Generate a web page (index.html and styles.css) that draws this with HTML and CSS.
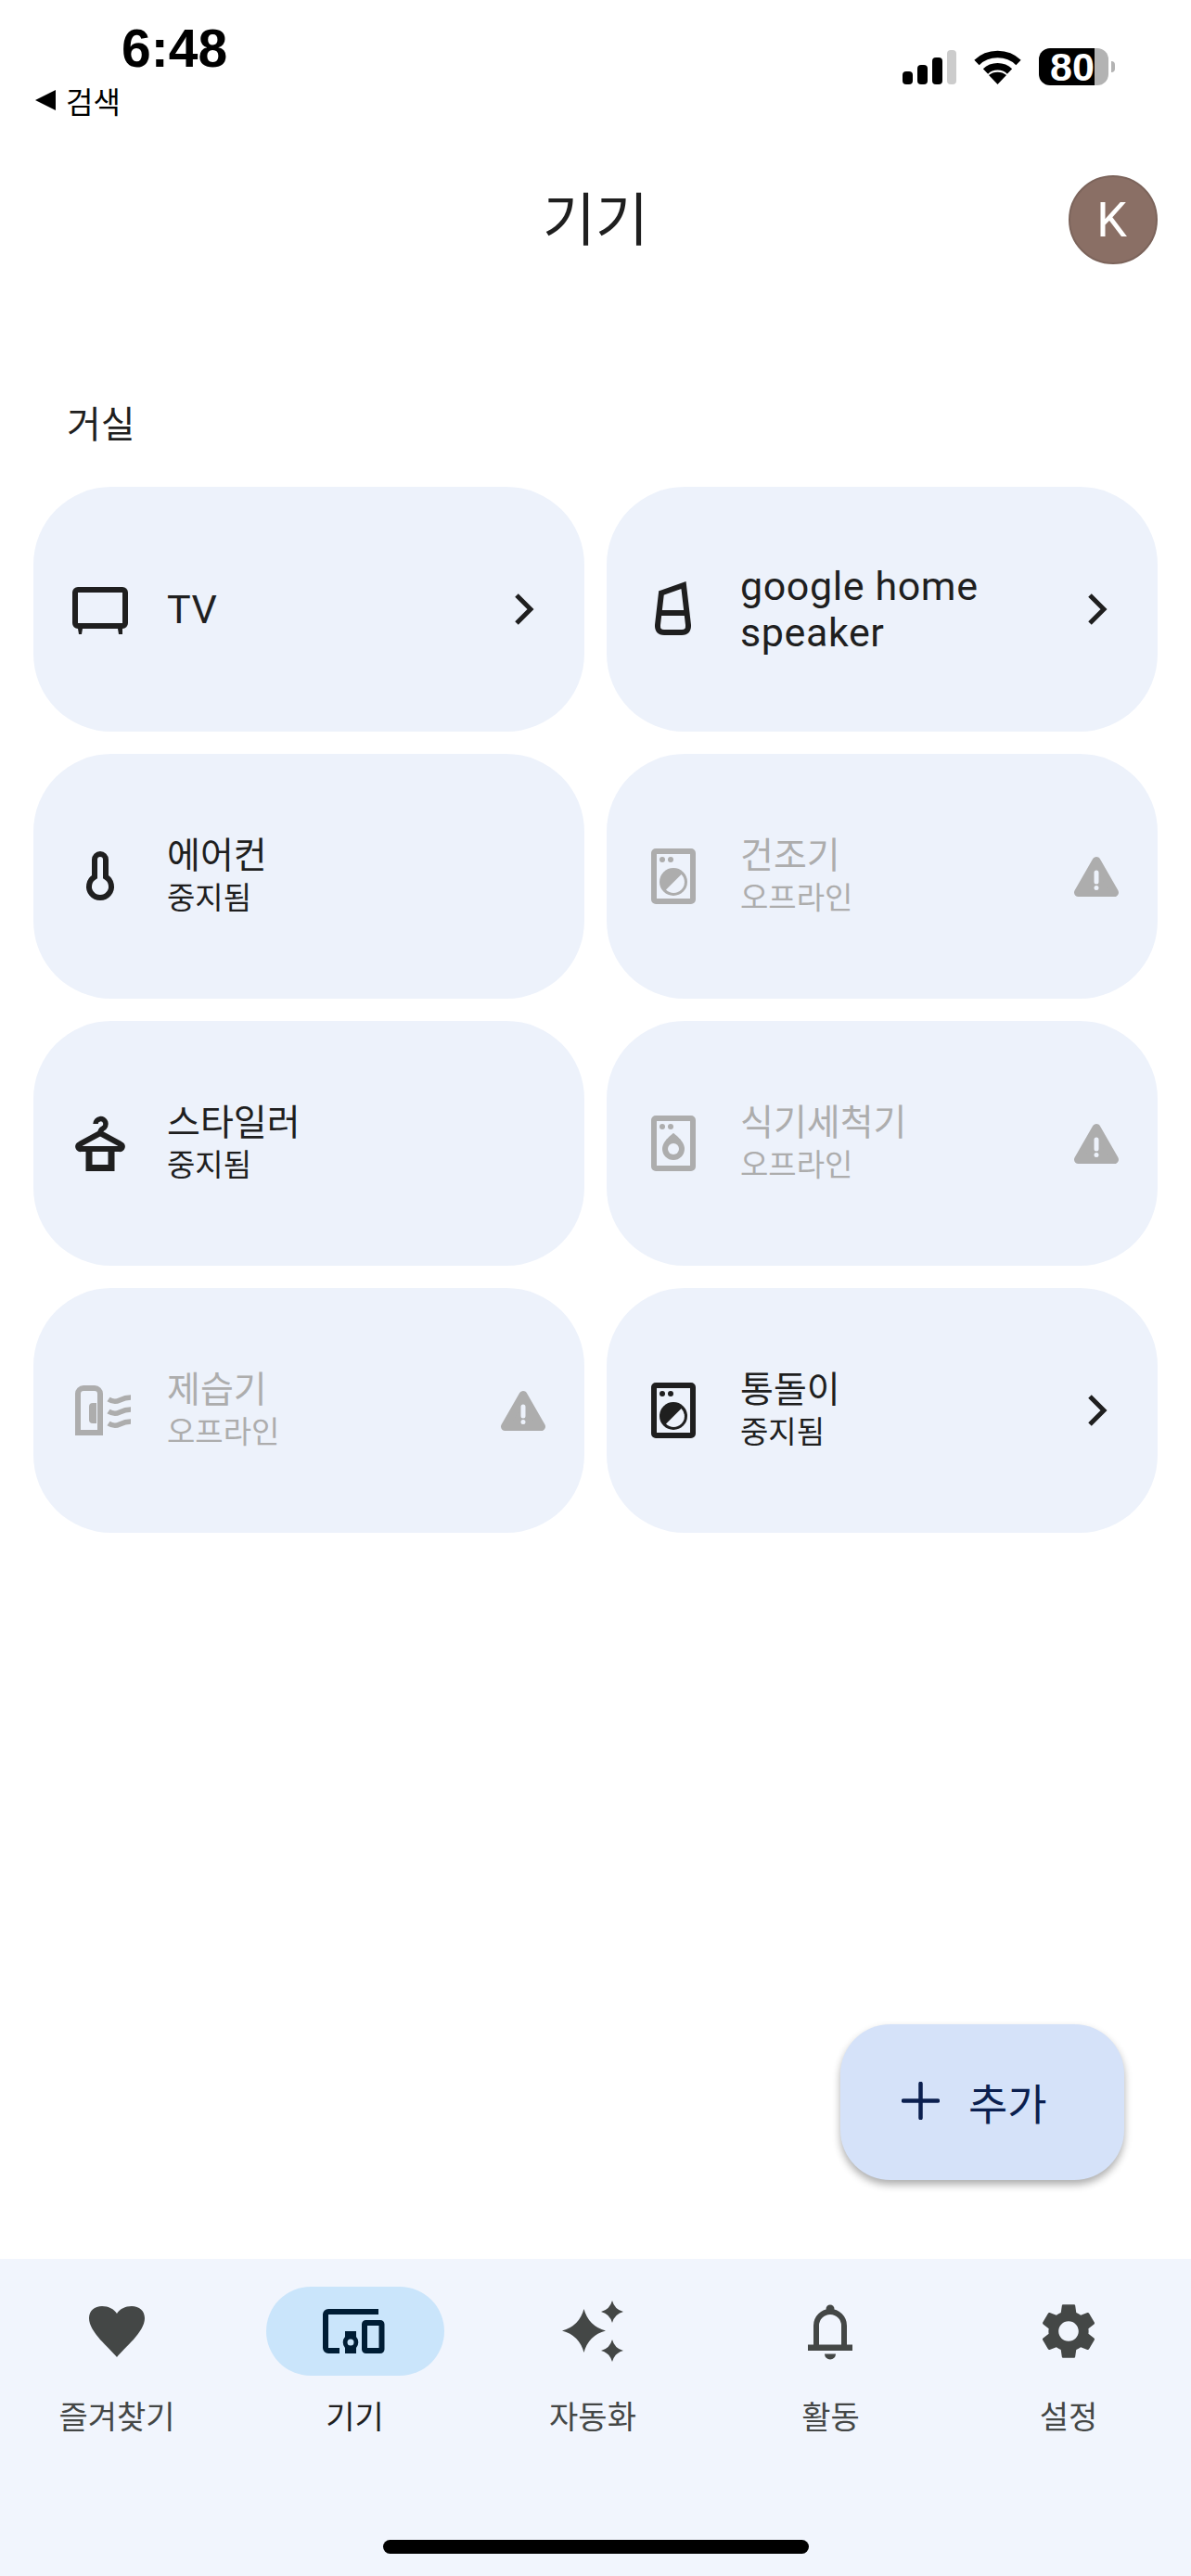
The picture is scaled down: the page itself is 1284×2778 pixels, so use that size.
FILE: index.html
```html
<!DOCTYPE html>
<html lang="ko">
<head>
<meta charset="utf-8">
<title>기기</title>
<link rel="stylesheet" href="styles.css">
</head>
<body>
<div class="phone">
  <div class="status">
    <div class="status-left">
      <div class="time">6:48</div>
      <div class="back">
        <svg class="back-arrow" viewBox="0 0 22 22" width="22" height="22"><path d="M22 0V22L0 11Z"/></svg>
        <span>검색</span>
      </div>
    </div>
    <div class="status-right">
      <svg class="signal" viewBox="0 0 58 37" width="58" height="37">
        <rect x="0" y="23" width="11" height="14" rx="4"/>
        <rect x="16" y="16" width="11" height="21" rx="4"/>
        <rect x="32" y="8" width="11" height="29" rx="4"/>
        <rect class="signal-off" x="48" y="0" width="10" height="37" rx="4"/>
      </svg>
      <svg class="wifi" viewBox="0 0 51 37" width="51" height="37">
        <path class="wifi-arc" d="M3 13.500C15 1.500 36 1.500 48 13.500"/>
        <path class="wifi-arc" d="M12.500 23C19.500 16 31.500 16 38.500 23"/>
        <path d="M25.500 37L16 27C21 22.500 30 22.500 35 27Z"/>
      </svg>
      <div class="battery">
        <div class="battery-body">80</div>
        <div class="battery-nub"></div>
      </div>
    </div>
  </div>

  <header class="header">
    <div></div>
    <h1 class="title">기기</h1>
    <div class="avatar">K</div>
  </header>

  <main class="main">
    <h2 class="room">거실</h2>
    <div class="grid">

      <div class="card">
        <svg class="icon" viewBox="0 0 72 72">
          <rect class="line" x="9" y="15" width="54" height="39" rx="3"/>
          <path class="solid" d="M12 57h5l-1 6h-3ZM55 57h5v6h-4Z"/>
        </svg>
        <div class="text"><div class="name name-latin">TV</div></div>
        <svg class="trail" viewBox="0 0 72 72"><path class="chev" d="M29 21L44 36L29 51"/></svg>
      </div>

      <div class="card">
        <svg class="icon" viewBox="0 0 72 72">
          <path class="line" d="M23 18.500L47 10L52 53Q52.500 61 45 61H26Q18.500 61 19 53Z"/>
          <path class="line" d="M21 40H50"/>
        </svg>
        <div class="text"><div class="name name-latin">google home speaker</div></div>
        <svg class="trail" viewBox="0 0 72 72"><path class="chev" d="M29 21L44 36L29 51"/></svg>
      </div>

      <div class="card">
        <svg class="icon" viewBox="0 0 72 72">
          <path class="line" d="M30 36.600V18a6 6 0 0 1 12 0V36.600A12 12 0 1 1 30 36.600Z"/>
        </svg>
        <div class="text"><div class="name">에어컨</div><div class="sub">중지됨</div></div>
      </div>

      <div class="card card-off">
        <svg class="icon" viewBox="0 0 72 72">
          <rect class="line" x="15" y="9" width="42" height="54" rx="2"/>
          <circle class="solid" cx="24" cy="18" r="3"/><circle class="solid" cx="33" cy="18" r="3"/>
          <circle class="solid" cx="36" cy="42" r="15"/>
          <path class="hole" d="M44.500 34A11.500 11.500 0 0 1 28 50.500Z"/>
        </svg>
        <div class="text"><div class="name">건조기</div><div class="sub">오프라인</div></div>
        <svg class="trail" viewBox="0 0 72 72"><path class="warn" d="M36 19.500L55.500 53.500H16.500Z"/><path class="warn-mark" d="M36 32V42M36 48.500V48.600"/></svg>
      </div>

      <div class="card">
        <svg class="icon" viewBox="0 0 72 72">
          <path class="line-thin" d="M31 15a5.500 5.500 0 1 1 8 5q-3 1.500-3 5"/>
          <path class="line" d="M36 25L58 37A2.500 2.500 0 0 1 56.500 42H15.500A2.500 2.500 0 0 1 14 37Z"/>
          <path class="line-heavy" d="M24 42V62.500H48V42"/>
        </svg>
        <div class="text"><div class="name">스타일러</div><div class="sub">중지됨</div></div>
      </div>

      <div class="card card-off">
        <svg class="icon" viewBox="0 0 72 72">
          <rect class="line" x="15" y="9" width="42" height="54" rx="2"/>
          <circle class="solid" cx="24" cy="18" r="3"/><circle class="solid" cx="33" cy="18" r="3"/>
          <path class="solid" d="M36 25C36 25 48 33 48 42A12 12 0 0 1 24 42C24 33 36 25 36 25Z"/>
          <circle class="hole" cx="36" cy="42" r="6"/>
        </svg>
        <div class="text"><div class="name">식기세척기</div><div class="sub">오프라인</div></div>
        <svg class="trail" viewBox="0 0 72 72"><path class="warn" d="M36 19.500L55.500 53.500H16.500Z"/><path class="warn-mark" d="M36 32V42M36 48.500V48.600"/></svg>
      </div>

      <div class="card card-off">
        <svg class="icon" viewBox="0 0 72 72">
          <path class="line" d="M12 60V18a6 6 0 0 1 6-6h12a6 6 0 0 1 6 6V60Z"/>
          <path class="solid" d="M32 28h-4a4 4 0 0 0-4 4v14a4 4 0 0 0 4 4h4Z"/>
          <path class="wave" d="M45 24q6 4 12 1t12-3M45 37q6 4 12 1t12-3M45 50q6 4 12 1t12-3"/>
        </svg>
        <div class="text"><div class="name">제습기</div><div class="sub">오프라인</div></div>
        <svg class="trail" viewBox="0 0 72 72"><path class="warn" d="M36 19.500L55.500 53.500H16.500Z"/><path class="warn-mark" d="M36 32V42M36 48.500V48.600"/></svg>
      </div>

      <div class="card">
        <svg class="icon" viewBox="0 0 72 72">
          <rect class="line" x="15" y="9" width="42" height="54" rx="2"/>
          <circle class="solid" cx="24" cy="18" r="3"/><circle class="solid" cx="33" cy="18" r="3"/>
          <circle class="solid" cx="36" cy="42" r="15"/>
          <path class="hole" d="M44.500 34A11.500 11.500 0 0 1 28 50.500Z"/>
        </svg>
        <div class="text"><div class="name">통돌이</div><div class="sub">중지됨</div></div>
        <svg class="trail" viewBox="0 0 72 72"><path class="chev" d="M29 21L44 36L29 51"/></svg>
      </div>

    </div>
  </main>

  <button class="fab">
    <svg class="fab-plus" viewBox="0 0 41 41" width="41" height="41"><path d="M20.500 2V39M2 20.500H39"/></svg>
    <span>추가</span>
  </button>

  <nav class="nav">
    <div class="nav-items">
      <div class="nav-item">
        <div class="nav-icon">
          <svg viewBox="0 0 72 72" width="72" height="72"><path class="nav-fill" d="M36 64C28 54 6 37 6 22C6 14 12 9 20 9C27 9 33 12 36 17C39 12 45 9 52 9C60 9 66 14 66 22C66 37 44 54 36 64Z"/></svg>
        </div>
        <div class="nav-label">즐겨찾기</div>
      </div>
      <div class="nav-item nav-item-active">
        <div class="nav-icon">
          <svg viewBox="0 0 72 72" width="72" height="72">
            <path class="dev" d="M61 12H7a6 6 0 0 0-6 6V54a6 6 0 0 0 6 6H19V54H7V18H61Z"/>
            <rect class="dev-line" x="46" y="27" width="18.500" height="30" rx="1.500"/>
            <path class="dev" d="M25 36H37V42A9 9 0 0 1 37 54V60H25V54A9 9 0 0 1 25 42Z"/>
            <circle class="dev-hole" cx="31" cy="48" r="3.500"/>
          </svg>
        </div>
        <div class="nav-label">기기</div>
      </div>
      <div class="nav-item">
        <div class="nav-icon">
          <svg viewBox="0 0 72 72" width="72" height="72">
            <path class="nav-fill" d="M26.500 12Q31.500 30.500 50 35.500Q31.500 40.500 26.500 59Q21.500 40.500 3 35.500Q21.500 30.500 26.500 12Z"/>
            <path class="nav-fill" d="M57 3Q59.500 12.500 69 15Q59.500 17.500 57 27Q54.500 17.500 45 15Q54.500 12.500 57 3Z"/>
            <path class="nav-fill" d="M57 45Q59.500 54.500 69 57Q59.500 59.500 57 69Q54.500 59.500 45 57Q54.500 54.500 57 45Z"/>
          </svg>
        </div>
        <div class="nav-label">자동화</div>
      </div>
      <div class="nav-item">
        <div class="nav-icon">
          <svg viewBox="1 0 72 72" width="72" height="72">
            <path class="bell" d="M21 52V30a15 15 0 0 1 30 0V52"/>
            <circle class="nav-fill" cx="36" cy="12" r="4.500"/>
            <rect class="nav-fill" x="12" y="50.500" width="48" height="6.500"/>
            <path class="nav-fill" d="M30 60.500h12a6 6 0 0 1-12 0Z"/>
          </svg>
        </div>
        <div class="nav-label">활동</div>
      </div>
      <div class="nav-item">
        <div class="nav-icon">
          <svg viewBox="0 0 24 24" width="72" height="72"><path class="nav-fill" d="M19.140 12.940c.04-.3.06-.61.06-.94 0-.32-.02-.64-.07-.94l2.030-1.580c.18-.14.23-.41.12-.61l-1.920-3.320c-.12-.22-.37-.29-.59-.22l-2.390.96c-.5-.38-1.030-.7-1.620-.94l-.36-2.540c-.04-.24-.24-.41-.48-.41h-3.840c-.24 0-.43.17-.47.41l-.36 2.540c-.59.24-1.130.57-1.620.94l-2.390-.96c-.22-.08-.47 0-.59.22L2.740 8.870c-.12.21-.08.47.12.61l2.030 1.580c-.05.3-.09.63-.09.94s.02.64.07.94l-2.030 1.580c-.18.14-.23.41-.12.61l1.920 3.320c.12.22.37.29.59.22l2.390-.96c.5.38 1.030.7 1.620.94l.36 2.540c.05.24.24.41.48.41h3.840c.24 0 .44-.17.47-.41l.36-2.540c.59-.24 1.130-.56 1.620-.94l2.390.96c.22.08.47 0 .59-.22l1.920-3.320c.12-.22.07-.47-.12-.61l-2.010-1.580zM12 15.600c-1.980 0-3.600-1.620-3.600-3.600s1.620-3.600 3.600-3.600 3.600 1.620 3.600 3.600-1.620 3.600-3.600 3.600z"/></svg>
        </div>
        <div class="nav-label">설정</div>
      </div>
    </div>
    <div class="home-bar"></div>
  </nav>
</div>
</body>
</html>
```

FILE: styles.css
```css
:root {
  --ink: #1f1f1f;
  --card: #edf2fb;
  --off: #adadad;
  --nav: #f1f5fd;
  --nav-ink: #444746;
  --kr: "Noto Sans CJK KR", sans-serif;
}

* { box-sizing: border-box; }

html, body {
  margin: 0;
  padding: 0;
  background: #fff;
}

.phone {
  position: relative;
  width: 1284px;
  height: 2778px;
  display: flex;
  flex-direction: column;
  overflow: hidden;
  font-family: Roboto, var(--kr);
  color: var(--ink);
}

/* status bar */
.status {
  height: 130px;
  flex: none;
  display: flex;
  justify-content: space-between;
  padding: 0 82px 0 38px;
}

.status-left {
  display: flex;
  flex-direction: column;
}

.time {
  margin: 22px 0 0 93px;
  font-family: "Liberation Sans", sans-serif;
  font-weight: 700;
  font-size: 57px;
  line-height: 60px;
  color: #000;
}

.back {
  display: flex;
  align-items: center;
  gap: 11px;
  margin-top: 6px;
  font-family: var(--kr);
  font-size: 32px;
  line-height: 40px;
  color: #000;
}

.status-right {
  display: flex;
  align-items: flex-start;
  gap: 19px;
  padding-top: 52px;
}

.signal, .wifi { margin-top: 2px; }
.signal-off { fill: #ccc; }
.wifi-arc {
  fill: none;
  stroke: #000;
  stroke-width: 7.500;
}

.battery {
  display: flex;
  align-items: center;
  gap: 3px;
}

.battery-body {
  width: 75px;
  height: 40px;
  border-radius: 12px;
  background: linear-gradient(90deg, #000 60px, #b3b3b3 60px);
  color: #fff;
  font-family: "Liberation Sans", sans-serif;
  font-weight: 700;
  font-size: 43px;
  line-height: 40px;
  padding-left: 12px;
}

.battery-nub {
  width: 4px;
  height: 12px;
  border-radius: 0 6px 6px 0;
  background: #b3b3b3;
}

/* header */
.header {
  flex: none;
  display: grid;
  grid-template-columns: 96px 1fr 96px;
  align-items: center;
  margin-top: 59px;
  padding: 0 36px;
}

.title {
  margin: 0;
  padding-bottom: 8px;
  text-align: center;
  font-family: var(--kr);
  font-weight: 400;
  font-size: 62px;
  line-height: 88px;
  color: var(--ink);
}

.avatar {
  width: 96px;
  height: 96px;
  padding-right: 3px;
  border-radius: 50%;
  border: 2px solid #7c645b;
  background: #8a6f65;
  color: #fff;
  display: flex;
  align-items: center;
  justify-content: center;
  font-size: 52px;
  font-weight: 400;
}

/* devices */
.main {
  flex: 1;
  padding: 0 36px;
}

.room {
  margin: 146px 0 46px 36px;
  font-family: var(--kr);
  font-weight: 400;
  font-size: 40px;
  line-height: 48px;
  color: var(--ink);
}

.grid {
  display: grid;
  grid-template-columns: 594px 594px;
  grid-auto-rows: 264px;
  gap: 24px;
}

.card {
  display: flex;
  align-items: center;
  gap: 36px;
  padding: 0 30px 0 36px;
  border-radius: 84px;
  background: var(--card);
  color: var(--ink);
}

.card-off { color: var(--off); }

.icon {
  flex: none;
  width: 72px;
  height: 72px;
}

.trail {
  flex: none;
  width: 72px;
  height: 72px;
}

.text {
  flex: 1;
  min-width: 0;
}

.name {
  font-family: Roboto, var(--kr);
  font-size: 39px;
  line-height: 50px;
}

.name-latin {
  font-weight: 450;
  font-size: 43px;
  letter-spacing: .6px;
}

.sub {
  margin-bottom: 2px;
  font-family: Roboto, var(--kr);
  font-size: 33px;
  line-height: 42px;
}

.line {
  fill: none;
  stroke: currentColor;
  stroke-width: 6;
}

.line-heavy {
  fill: none;
  stroke: currentColor;
  stroke-width: 7;
}

.line-thin {
  fill: none;
  stroke: currentColor;
  stroke-width: 5.500;
}

.wave {
  fill: none;
  stroke: currentColor;
  stroke-width: 5.500;
}

.solid { fill: currentColor; }
.hole { fill: var(--card); }

.chev {
  fill: none;
  stroke: currentColor;
  stroke-width: 5;
}

.warn {
  fill: currentColor;
  stroke: currentColor;
  stroke-width: 9;
  stroke-linejoin: round;
}

.warn-mark {
  fill: none;
  stroke: var(--card);
  stroke-width: 5;
  stroke-linecap: round;
}

/* floating button */
.fab {
  position: absolute;
  right: 72px;
  bottom: 427px;
  width: 306px;
  height: 168px;
  display: flex;
  align-items: center;
  gap: 31px;
  padding: 0 0 3px 66px;
  border: 0;
  border-radius: 54px;
  background: #d5e2f9;
  box-shadow: 0 5px 9px rgba(0, 0, 0, .32);
  color: #0b1f4f;
  font-family: var(--kr);
  font-size: 46px;
}

.fab-plus path {
  fill: none;
  stroke: #0b1f4f;
  stroke-width: 4.500;
  stroke-linecap: round;
}

/* bottom navigation */
.nav {
  flex: none;
  height: 342px;
  display: flex;
  flex-direction: column;
  background: var(--nav);
  padding: 30px 0 24px;
}

.nav-items {
  display: grid;
  grid-template-columns: repeat(5, 240px);
  gap: 16.500px;
  padding-left: 6px;
}

.nav-item {
  display: flex;
  flex-direction: column;
  align-items: center;
  gap: 21px;
}

.nav-icon {
  width: 192px;
  height: 96px;
  border-radius: 48px;
  display: flex;
  align-items: center;
  justify-content: center;
}

.nav-item-active .nav-icon { background: #cae5fb; }

.nav-label {
  font-family: var(--kr);
  font-size: 34px;
  line-height: 44px;
  color: var(--nav-ink);
}

.nav-item-active .nav-label { color: var(--ink); }

.nav-fill { fill: var(--nav-ink); }

.bell {
  fill: none;
  stroke: var(--nav-ink);
  stroke-width: 6;
}

.dev { fill: #001d35; }
.dev-line {
  fill: none;
  stroke: #001d35;
  stroke-width: 6;
}
.dev-hole { fill: #cae5fb; }

.home-bar {
  width: 459px;
  height: 15px;
  margin: auto 0 0 413px;
  border-radius: 8px;
  background: #000;
}
```
